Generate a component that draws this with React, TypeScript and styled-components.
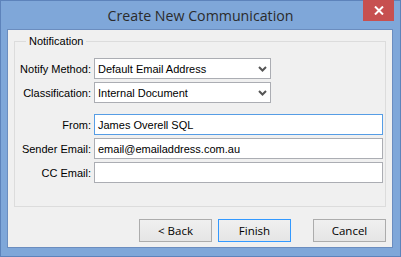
import styled, { createGlobalStyle } from 'styled-components'

const GlobalStyle = createGlobalStyle`
  html, body {
    margin: 0;
    padding: 0;
    background: #7fa6d8;
  }
`

const Window = styled.div`
  box-sizing: border-box;
  width: 401px;
  height: 257px;
  display: flex;
  flex-direction: column;
  background: #7fa7d9;
  border: 1px solid #5d83bb;
`

const TitleBar = styled.div`
  position: relative;
  height: 29px;
  display: flex;
  align-items: center;
  justify-content: center;
`

const Title = styled.div`
  font-family: "Open Sans", "Noto Sans", sans-serif;
  font-size: 14.2px;
  color: #2b2b2b;
`

const CloseButton = styled.div`
  position: absolute;
  top: -1px;
  right: 6px;
  width: 31px;
  height: 21px;
  background: #c75050;
  display: flex;
  align-items: center;
  justify-content: center;
`

const Client = styled.div`
  flex: 1;
  margin: 0 7px 8px 6px;
  background: #f0f0f0;
  border: 1px solid #6b8dbf;
  display: flex;
  flex-direction: column;
  padding: 5px 6px 5px 6px;
  font-family: "Liberation Sans", Arial, sans-serif;
  font-size: 11px;
  color: #000;
`

const Group = styled.fieldset`
  margin: 0;
  height: 172px;
  box-sizing: border-box;
  border: 1px solid #dcdcdc;
  padding: 11px 2px 0 5px;
  display: flex;
  flex-direction: column;
`

const Legend = styled.legend`
  padding: 0 3px;
  margin-left: 6px;
  font-size: 11px;
`

const Form = styled.div`
  display: grid;
  grid-template-columns: 71px 1fr;
  column-gap: 3px;
  row-gap: 3px;
  align-items: center;
`

const Label = styled.div`
  text-align: right;
  white-space: nowrap;
`

const Field = styled.div<{ $width?: number; $focused?: boolean }>`
  box-sizing: border-box;
  height: 21px;
  width: ${p => (p.$width ? `${p.$width}px` : '100%')};
  background: #fff;
  border: 1px solid ${p => (p.$focused ? '#569de5' : '#abadb3')};
  display: flex;
  align-items: center;
  padding: 0 3px;
  white-space: nowrap;
  overflow: hidden;
`

const FieldText = styled.span`
  flex: 1;
`

const Spacer = styled.div`
  grid-column: 1 / span 2;
  height: 5px;
`

const ButtonRow = styled.div`
  display: flex;
  justify-content: flex-end;
  margin-top: 12px;
  gap: 6px;
`

const Button = styled.div<{ $default?: boolean; $apart?: boolean }>`
  box-sizing: border-box;
  width: 73px;
  height: 23px;
  display: flex;
  align-items: center;
  justify-content: center;
  border: 1px solid ${p => (p.$default ? '#3399ff' : '#acacac')};
  background: linear-gradient(#f0f0f0, #e5e5e5);
  font-family: "Open Sans", "Noto Sans", sans-serif;
  font-size: 11.5px;
  color: #000;
  margin-left: ${p => (p.$apart ? '16px' : '0')};
`

const Chevron = () => (
  <svg width="9" height="6" viewBox="0 0 9 6">
    <path d="M1 1 L4.5 4.5 L8 1" stroke="#555" strokeWidth="2" fill="none" />
  </svg>
)

const Select = ({ value }: { value: string }) => (
  <Field $width={177}>
    <FieldText>{value}</FieldText>
    <Chevron />
  </Field>
)

export default function App() {
  return (
    <>
      <GlobalStyle />
      <Window>
        <TitleBar>
          <Title>Create New Communication</Title>
          <CloseButton>
            <svg width="10" height="9" viewBox="0 0 10 9">
              <path d="M1 0.5 L9 8.5 M9 0.5 L1 8.5" stroke="#fff" strokeWidth="2" />
            </svg>
          </CloseButton>
        </TitleBar>
        <Client>
          <Group>
            <Legend>Notification</Legend>
            <Form>
              <Label>Notify Method:</Label>
              <Select value="Default Email Address" />
              <Label>Classification:</Label>
              <Select value="Internal Document" />
              <Spacer />
              <Label>From:</Label>
              <Field $focused>James Overell SQL</Field>
              <Label>Sender Email:</Label>
              <Field>email@emailaddress.com.au</Field>
              <Label>CC Email:</Label>
              <Field />
            </Form>
          </Group>
          <ButtonRow>
            <Button>&lt; Back</Button>
            <Button $default>Finish</Button>
            <Button $apart>Cancel</Button>
          </ButtonRow>
        </Client>
      </Window>
    </>
  )
}
